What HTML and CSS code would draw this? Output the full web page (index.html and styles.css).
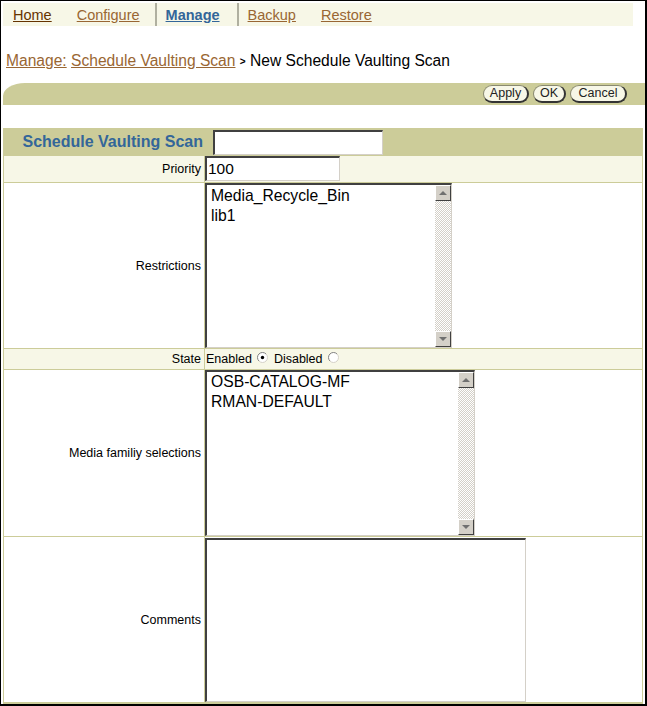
FILE: index.html
```html
<!DOCTYPE html>
<html>
<head>
<meta charset="utf-8">
<title>New Schedule Vaulting Scan</title>
<link rel="stylesheet" href="styles.css">
</head>
<body>
<div class="frame">
  <nav class="tabs">
    <a class="tab tab-visited tab-home" href="#">Home</a>
    <a class="tab tab-configure" href="#">Configure</a>
    <span class="tab-sep"></span>
    <a class="tab tab-active" href="#">Manage</a>
    <span class="tab-sep"></span>
    <a class="tab tab-backup" href="#">Backup</a>
    <a class="tab" href="#">Restore</a>
  </nav>

  <div class="crumbs">
    <a class="crumb-link" href="#">Manage:</a> <a class="crumb-link" href="#">Schedule Vaulting Scan</a> <span class="crumb-sep">&gt;</span> <span class="crumb-current">New Schedule Vaulting Scan</span>
  </div>

  <div class="actionbar">
    <button class="btn btn-apply">Apply</button>
    <button class="btn btn-ok">OK</button>
    <button class="btn btn-cancel">Cancel</button>
  </div>

  <div class="form">
    <div class="row row-head">
      <div class="label head-title">Schedule Vaulting Scan</div>
      <div class="value head-value"><div class="field field-name"></div></div>
    </div>
    <div class="row row-priority row-shaded">
      <div class="label">Priority</div>
      <div class="value"><div class="field field-priority">100</div></div>
    </div>
    <div class="row row-restrict">
      <div class="label">Restrictions</div>
      <div class="value">
        <div class="listbox listbox-restrict">
          <div class="lb-items">
            <div>Media_Recycle_Bin</div>
            <div>lib1</div>
          </div>
          <div class="scrollbar">
            <span class="sb-btn sb-up"></span>
            <span class="sb-track"></span>
            <span class="sb-btn sb-down"></span>
          </div>
        </div>
      </div>
    </div>
    <div class="row row-state row-shaded">
      <div class="label">State</div>
      <div class="value state-value">
        <span>Enabled</span>
        <svg class="radio" width="11" height="11" viewBox="0 0 11 11">
          <circle cx="5.5" cy="5.5" r="5" fill="#fff"/>
          <path d="M1.96 9.04 A5 5 0 0 1 9.04 1.96" fill="none" stroke="#808080" stroke-width="1"/>
          <path d="M9.04 1.96 A5 5 0 0 1 1.96 9.04" fill="none" stroke="#d4d0c8" stroke-width="1"/>
          <circle cx="5.5" cy="5.5" r="1.7" fill="#000"/>
        </svg>
        <span class="state-disabled">Disabled</span>
        <svg class="radio" width="11" height="11" viewBox="0 0 11 11">
          <circle cx="5.5" cy="5.5" r="5" fill="#fff"/>
          <path d="M1.96 9.04 A5 5 0 0 1 9.04 1.96" fill="none" stroke="#808080" stroke-width="1"/>
          <path d="M9.04 1.96 A5 5 0 0 1 1.96 9.04" fill="none" stroke="#d4d0c8" stroke-width="1"/>
        </svg>
      </div>
    </div>
    <div class="row row-media">
      <div class="label">Media familiy selections</div>
      <div class="value">
        <div class="listbox listbox-media">
          <div class="lb-items">
            <div>OSB-CATALOG-MF</div>
            <div>RMAN-DEFAULT</div>
          </div>
          <div class="scrollbar">
            <span class="sb-btn sb-up"></span>
            <span class="sb-track"></span>
            <span class="sb-btn sb-down"></span>
          </div>
        </div>
      </div>
    </div>
    <div class="row row-comments">
      <div class="label">Comments</div>
      <div class="value"><div class="field textarea"></div></div>
    </div>
  </div>
</div>
</body>
</html>
```

FILE: styles.css
```css
* { box-sizing: border-box; }
html, body { margin: 0; padding: 0; background: #fff; }
body { font-family: "Liberation Sans", Arial, sans-serif; color: #000; }

.frame {
  width: 647px;
  height: 706px;
  border-style: solid;
  border-color: #000;
  border-width: 1px 2px 2px 1px;
  overflow: hidden;
}

/* ---- tabs ---- */
.tabs {
  margin: 2px 0 0 2px;
  width: 630px;
  height: 23px;
  background: #f7f7e7;
  display: flex;
  align-items: stretch;
  padding-left: 10px;
  font-size: 14.5px;
}
.tab {
  display: flex;
  align-items: center;
  padding-top: 1px;
  color: #996633;
  text-decoration: underline;
}
.tab-home { margin-right: 25px; }
.tab-visited { color: #663300; }
.tab-configure { margin-right: 15px; }
.tab-backup { margin-right: 25px; }
.tab-active {
  color: #336699;
  font-weight: bold;
  margin-right: 17px;
}
.tab-sep {
  width: 2px;
  background: #b0b0a0;
  margin-right: 9px;
}

/* ---- breadcrumbs ---- */
.crumbs {
  margin-top: 26px;
  padding-left: 5px;
  font-size: 15.6px;
  line-height: 18px;
  white-space: nowrap;
}
.crumb-link { color: #996633; text-decoration: underline; }
.crumb-sep { font-size: 10px; font-weight: bold; vertical-align: 1px; }
.crumb-current { color: #000; }

/* ---- action bar ---- */
.actionbar {
  margin: 12px 0 0 2px;
  width: 642px;
  height: 22px;
  background: #cccc99;
  border-top-left-radius: 22px 13px;
  display: flex;
  justify-content: flex-end;
  align-items: center;
  gap: 4px;
  padding-right: 18px;
}
.btn {
  height: 18px;
  padding: 0;
  font-family: "Liberation Sans", Arial, sans-serif;
  font-size: 12.5px;
  line-height: 15px;
  color: #222;
  background: #f7f7e7;
  border-style: solid;
  border-width: 1px 2px 2px 1px;
  border-color: #8a8a70 #333 #333 #8a8a70;
  border-radius: 9px;
  text-align: center;
}
.btn-apply { width: 46px; }
.btn-ok { width: 33px; }
.btn-cancel { width: 57px; }

/* ---- form ---- */
.form {
  margin: 23px 0 0 2px;
  width: 640px;
  border: 1px solid #cccc99;
}
.row {
  display: grid;
  grid-template-columns: 201px 1fr;
  border-bottom: 1px solid #cccc99;
}
.row-shaded { background: #f7f7e7; }
.label {
  display: flex;
  align-items: center;
  justify-content: flex-end;
  padding-right: 3px;
  border-right: 1px solid #cccc99;
  font-size: 12.5px;
  white-space: nowrap;
}
.value {
  display: flex;
  align-items: flex-start;
}

.row-head { height: 27px; background: #cccc99; }
.head-title {
  font-size: 16px;
  font-weight: bold;
  color: #336699;
  padding-right: 1px;
}
.head-value { padding-left: 8px; align-items: center; }

.row-priority { height: 27px; }
.row-restrict { height: 166px; }
.row-state { height: 21px; }
.row-media { height: 167px; }
.row-comments { height: 166px; }

.field {
  background: #fff;
  border-style: solid;
  border-width: 2px 1px 1px 2px;
  border-color: #404040 #d4d0c8 #d4d0c8 #404040;
  font-size: 15.5px;
}
.field-name { width: 170px; height: 25px; }
.field-priority {
  width: 135px;
  height: 25px;
  line-height: 21px;
  padding-left: 1px;
}
.textarea {
  width: 321px;
  height: 164px;
  margin-top: 1px;
}

/* ---- listbox ---- */
.listbox {
  display: flex;
  background: #fff;
  border-style: solid;
  border-width: 2px 1px 1px 2px;
  border-color: #404040 #d4d0c8 #d4d0c8 #404040;
  height: 165px;
}
.listbox-restrict { width: 247px; }
.listbox-media { width: 270px; height: 166px; }
.lb-items {
  flex: 1;
  padding: 1px 0 0 4px;
  font-size: 15.7px;
  line-height: 20px;
  white-space: nowrap;
}
.listbox-media .lb-items { padding-top: 0; }
.scrollbar {
  width: 16px;
  display: flex;
  flex-direction: column;
}
.sb-btn {
  width: 16px;
  height: 16px;
  background: #d4d0c8;
  border-style: solid;
  border-width: 1px;
  border-color: #fff #404040 #404040 #fff;
  display: flex;
  align-items: center;
  justify-content: center;
}
.sb-up::after {
  content: "";
  border-left: 4px solid transparent;
  border-right: 4px solid transparent;
  border-bottom: 4px solid #707070;
}
.sb-down::after {
  content: "";
  border-left: 4px solid transparent;
  border-right: 4px solid transparent;
  border-top: 4px solid #707070;
}
.sb-track {
  flex: 1;
  background: repeating-conic-gradient(#d4d0c8 0 25%, #fff 0 50%) 0 0 / 2px 2px;
}

/* ---- state ---- */
.state-value {
  align-items: center;
  padding-left: 1px;
  font-size: 12.5px;
}
.radio {
  margin: 0 6px 3px 5px;
  flex: none;
}
```
